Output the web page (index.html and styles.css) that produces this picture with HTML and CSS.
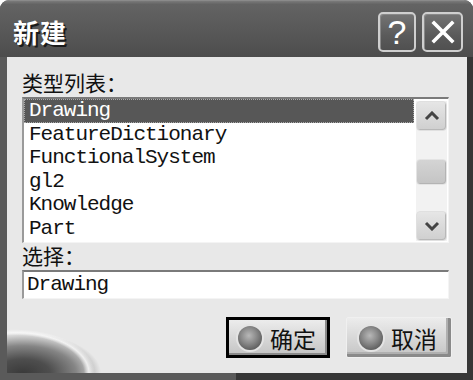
FILE: index.html
```html
<!DOCTYPE html>
<html lang="zh-CN">
<head>
  <meta charset="UTF-8">
  <title>新建</title>
  <link rel="stylesheet" href="styles.css">
</head>
<body>

  <!-- Dialog window -->
  <div class="dialog">

    <!-- Title bar with caption buttons -->
    <div class="titlebar">
      <span class="title">新建</span>
      <div class="caption-buttons">
        <button class="cap-btn cap-help">?</button>
        <button class="cap-btn cap-close">
          <svg width="24" height="24" viewBox="0 0 24 24">
            <path d="M3 3 L21 21 M21 3 L3 21" stroke="#fff" stroke-width="3.6" stroke-linecap="square" fill="none"/>
          </svg>
        </button>
      </div>
    </div>

    <!-- Client area -->
    <div class="client">
      <div class="field-label">类型列表：</div>

      <div class="listbox">
        <ul class="items">
          <li class="selected">Drawing</li>
          <li>FeatureDictionary</li>
          <li>FunctionalSystem</li>
          <li>gl2</li>
          <li>Knowledge</li>
          <li>Part</li>
        </ul>
        <div class="scrollbar">
          <div class="sb-btn">
            <svg width="16" height="10" viewBox="0 0 16 10">
              <path d="M2 8 L8 2 L14 8" stroke="#444" stroke-width="3" fill="none"/>
            </svg>
          </div>
          <div class="sb-track">
            <div class="sb-thumb"></div>
          </div>
          <div class="sb-btn">
            <svg width="16" height="10" viewBox="0 0 16 10">
              <path d="M2 2 L8 8 L14 2" stroke="#444" stroke-width="3" fill="none"/>
            </svg>
          </div>
        </div>
      </div>

      <div class="field-label">选择：</div>
      <div class="textfield">Drawing</div>

      <!-- OK / Cancel -->
      <div class="actions">
        <button class="btn btn-default"><span class="orb"></span>确定</button>
        <button class="btn"><span class="orb"></span>取消</button>
      </div>
    </div>

  </div>

</body>
</html>
```

FILE: styles.css
```css
/* Page */
body {
  margin: 0;
  background-color: #fff;
  font-family: "Noto Sans CJK SC", sans-serif;
}

/* Window frame */
.dialog {
  width: 473px;
  height: 380px;
  box-sizing: border-box;
  display: flex;
  flex-direction: column;
  background: linear-gradient(to right, #5a5a5a 0, #5a5a5a 50%, #363636 50%, #363636 100%);
  border-radius: 9px 9px 0 0;
  overflow: hidden;
}

/* Title bar */
.titlebar {
  height: 57px;
  flex: none;
  box-sizing: border-box;
  display: flex;
  justify-content: space-between;
  align-items: flex-start;
  padding: 11px 10px 0 13px;
  background: linear-gradient(#7a7a7a 0, #636363 6%, #5a5a5a 45%, #525252 80%, #4c4c4c 100%);
  border-top: 1px solid #8a8a8a;
}

.title {
  color: #fff;
  font-size: 26px;
  font-weight: bold;
  line-height: 40px;
  letter-spacing: 1px;
  text-shadow: 2px 2px 0 #1a1a1a;
}

.caption-buttons {
  display: flex;
  gap: 6px;
}

.cap-btn {
  height: 40px;
  box-sizing: border-box;
  border: 2px solid #cfcfcf;
  border-radius: 5px;
  background: linear-gradient(#747474, #5a5a5a 60%, #505050);
  color: #fff;
  padding: 0;
  display: flex;
  align-items: center;
  justify-content: center;
  box-shadow: inset 1px 1px 0 #888;
}

.cap-help {
  width: 38px;
  font-family: "Liberation Sans", sans-serif;
  font-size: 34px;
  line-height: 1;
}

.cap-close {
  width: 41px;
}

/* Client area, with the faded swirl in the lower left corner */
.client {
  flex: 1;
  margin: 0 6px 7px 7px;
  padding: 13px 18px 0 15px;
  display: flex;
  flex-direction: column;
  background:
    radial-gradient(ellipse 84px 46px at 8px 100%, rgba(240,240,240,0) 82%, rgba(248,248,248,0.85) 88%, rgba(240,240,240,0) 95%),
    radial-gradient(ellipse 78px 40px at 16px 100%, #3a3a3a 0, #4e4e4e 35%, #858585 68%, rgba(232,232,232,0) 100%),
    #e8e8e8;
}

.field-label {
  color: #111;
  font-size: 21px;
  line-height: 24px;
}

/* List box */
.listbox {
  margin-top: 3px;
  height: 146px;
  box-sizing: border-box;
  display: flex;
  background-color: #fff;
  border-top: 2px solid #7a7a7a;
  border-left: 2px solid #9a9a9a;
  border-right: 1px solid #f4f4f4;
  border-bottom: 1px solid #f4f4f4;
}

.items {
  flex: 1;
  margin: 0;
  padding: 0;
  list-style: none;
  overflow: hidden;
}

.items li {
  height: 23.6px;
  box-sizing: border-box;
  padding-left: 5px;
  font-family: "Liberation Mono", monospace;
  font-size: 21px;
  line-height: 23.6px;
  letter-spacing: -1px;
  color: #111;
  white-space: nowrap;
}

.items li.selected {
  background-color: #575757;
  color: #fff;
  outline: 1px dotted #aaa;
  outline-offset: -1px;
}

/* Scrollbar */
.scrollbar {
  width: 31px;
  margin: 2px 1px 1px 2px;
  display: flex;
  flex-direction: column;
  background-color: #f2f2f2;
}

.sb-btn {
  height: 30px;
  box-sizing: border-box;
  display: flex;
  align-items: center;
  justify-content: center;
  background: linear-gradient(#e6e6e6, #cfcfcf);
  border: 1px solid #e0e0e0;
  border-radius: 4px;
  box-shadow: inset -1px -1px 0 #b8b8b8;
}

.sb-track {
  flex: 1;
  display: flex;
  flex-direction: column;
  justify-content: center;
  padding-top: 1px;
}

.sb-thumb {
  height: 26px;
  box-sizing: border-box;
  background: linear-gradient(#d4d4d4, #c4c4c4);
  border: 1px solid #e4e4e4;
  border-radius: 4px;
  box-shadow: inset -1px -1px 0 #b4b4b4;
}

/* Selection text field */
.textfield {
  margin-top: 3px;
  height: 29px;
  box-sizing: border-box;
  padding-left: 3px;
  background-color: #fff;
  border-top: 2px solid #7a7a7a;
  border-left: 2px solid #9a9a9a;
  border-right: 1px solid #f4f4f4;
  border-bottom: 1px solid #f4f4f4;
  font-family: "Liberation Mono", monospace;
  font-size: 21px;
  line-height: 26px;
  letter-spacing: -1px;
  color: #111;
}

/* Buttons */
.actions {
  margin-top: 18px;
  margin-right: -3px;
  display: flex;
  justify-content: flex-end;
  gap: 16px;
}

.btn {
  width: 106px;
  height: 41px;
  box-sizing: border-box;
  display: flex;
  align-items: center;
  gap: 8px;
  padding: 0 0 0 12px;
  font-family: "Noto Sans CJK SC", sans-serif;
  font-size: 23px;
  color: #111;
  background: linear-gradient(#ececec, #d6d6d6 55%, #c4c4c4);
  border: 1px solid #f0f0f0;
  border-radius: 2px;
  box-shadow: inset -3px -3px 0 #8a8a8a, inset -5px -5px 0 #b0b0b0;
}

.btn-default {
  width: 104px;
  border: 3px solid #000;
  border-radius: 0;
  padding-left: 9px;
  box-shadow: inset -2px -2px 0 #8a8a8a;
}

.orb {
  width: 24px;
  height: 24px;
  flex: none;
  border-radius: 50%;
  background: radial-gradient(circle at 45% 40%, #b8b8b8 0, #8a8a8a 40%, #5e5e5e 75%, #9a9a9a 100%);
  box-shadow: 0 0 0 2px #e4e4e4;
}
```
